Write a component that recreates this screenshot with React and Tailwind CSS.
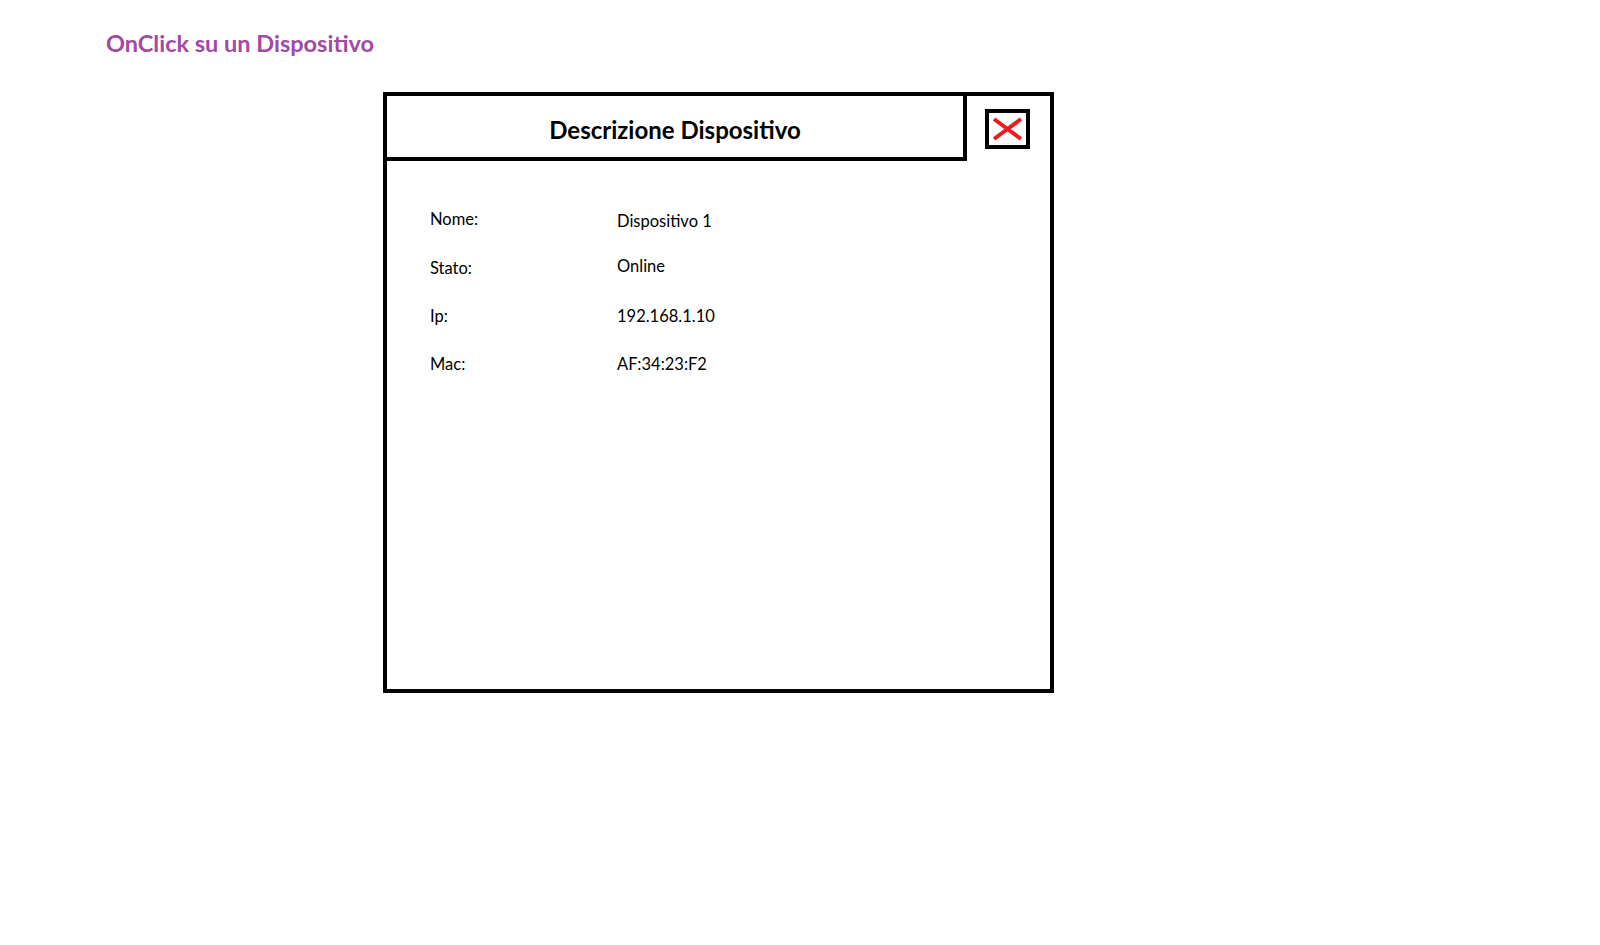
const rows = [
  { label: "Nome:", value: "Dispositivo 1", lt: "mt-0", vt: "mt-[2px]" },
  { label: "Stato:", value: "Online", lt: "-mt-[1px]", vt: "-mt-[3px]" },
  { label: "Ip:", value: "192.168.1.10", lt: "mt-0", vt: "mt-0" },
  { label: "Mac:", value: "AF:34:23:F2", lt: "mt-0", vt: "mt-0" },
];

export default function App() {
  return (
    <div className="min-h-[945px] w-full bg-white font-['Lato','Open_Sans',sans-serif] text-black">
      <div className="pl-[106px] pt-[28px]">
        <h1 className="text-[23.5px] font-bold leading-[30px] text-[#a349a4]">OnClick su un Dispositivo</h1>
      </div>

      <div className="ml-[383px] mt-[34px] flex h-[601px] w-[671px] flex-col border-4 border-black">
        {/* header */}
        <div className="flex">
          <div className="flex h-[65px] w-[580px] items-center justify-center border-r-4 border-b-4 border-black pt-[7px]">
            <span className="text-[24px] font-bold">Descrizione Dispositivo</span>
          </div>
          <div className="ml-[18px] mt-[13px] flex h-[40px] w-[45px] items-center justify-center border-4 border-black">
            <svg width="33" height="26" viewBox="0 0 33 26">
              <path d="M3 3 L30 23 M30 3 L3 23" stroke="#ed1c24" strokeWidth="4" strokeLinecap="butt" />
            </svg>
          </div>
        </div>

        {/* details */}
        <div className="mt-[49px] flex flex-col gap-[30px] pl-[43px] text-[16.5px] leading-[18px]">
          {rows.map((r) => (
            <div key={r.label} className="flex">
              <span className={`w-[187px] ${r.lt}`}>{r.label}</span>
              <span className={r.vt}>{r.value}</span>
            </div>
          ))}
        </div>
      </div>
    </div>
  );
}
